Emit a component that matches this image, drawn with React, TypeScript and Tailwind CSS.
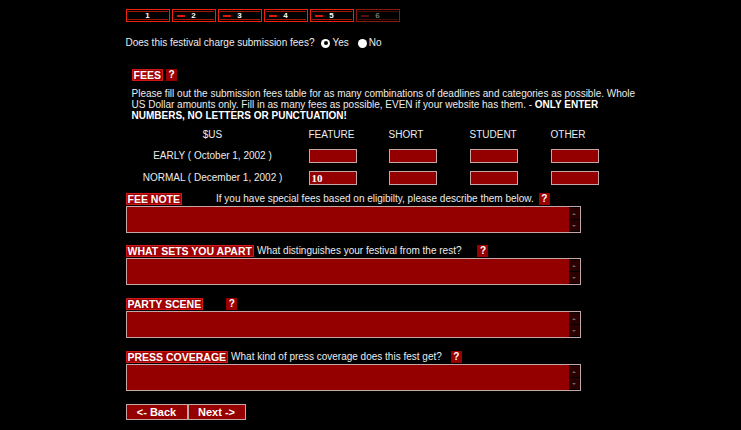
const font = { fontFamily: '"Liberation Sans", Arial, sans-serif' };

const steps = ['1', '2', '3', '4', '5', '6'];
const columns = ['FEATURE', 'SHORT', 'STUDENT', 'OTHER'];
const rows = [
  { label: 'EARLY ( October 1, 2002 )', values: ['', '', '', ''] },
  { label: 'NORMAL ( December 1, 2002 )', values: ['10', '', '', ''] },
];

function Help() {
  return (
    <span className="inline-flex h-[12px] w-[11px] items-center justify-center bg-[#990000] text-[10px] font-bold leading-none text-white">
      ?
    </span>
  );
}

function Label({ children }: { children: React.ReactNode }) {
  return (
    <span className="inline-flex h-[12px] items-center border border-[#d01818] bg-[#a00000] px-[1px] text-[10.5px] font-bold leading-none text-white">
      {children}
    </span>
  );
}

function TextBox() {
  return (
    <div className="flex h-[27px] w-[455px] border border-[#c4a6a6] bg-[#940000]">
      <div className="flex-1" />
      <div className="flex w-[11px] flex-col justify-between bg-black py-[1px]">
        <div className="flex h-[11px] items-center justify-center bg-[#2a0000]">
          <span className="h-0 w-0 border-x-[2px] border-b-[2px] border-x-transparent border-b-[#666]" />
        </div>
        <div className="flex h-[11px] items-center justify-center bg-[#2a0000]">
          <span className="h-0 w-0 border-x-[2px] border-t-[2px] border-x-transparent border-t-[#666]" />
        </div>
      </div>
    </div>
  );
}

function Step({ n, index }: { n: string; index: number }) {
  const dim = index === 5;
  return (
    <div
      className={`flex h-[13px] w-[44px] items-stretch border p-[1px] ${
        dim ? 'border-[#8a1a10]' : 'border-[#f02010]'
      }`}
    >
      <div
        className={`relative flex flex-1 items-center justify-center border-y bg-black ${
          dim ? 'border-[#4a0c08]' : 'border-[#a01808]'
        }`}
      >
        {index > 0 && (
          <span
            className={`absolute left-[3px] top-1/2 h-[2px] w-[8px] -translate-y-1/2 ${
              dim ? 'bg-[#5a1008]' : 'bg-[#e01808]'
            }`}
          />
        )}
        <span className={`text-[8px] font-bold leading-none ${dim ? 'text-[#777]' : 'text-white'}`}>{n}</span>
      </div>
    </div>
  );
}

function Radio({ checked, label }: { checked: boolean; label: string }) {
  return (
    <span className="inline-flex items-center gap-[2px]">
      <span className="flex h-[9px] w-[9px] items-center justify-center rounded-full bg-white">
        {checked && <span className="h-[4px] w-[4px] rounded-full bg-black" />}
      </span>
      <span>{label}</span>
    </span>
  );
}

export default function App() {
  return (
    <div className="min-h-[430px] w-full bg-black text-[#ececec]" style={font}>
      <div className="mx-auto w-[490px] pt-[9px]">
        <div className="flex gap-[2px]">
          {steps.map((s, i) => (
            <Step key={s} n={s} index={i} />
          ))}
        </div>

        <div className="mt-[15px] flex h-[12px] items-center text-[10px] leading-none">
          <span>Does this festival charge submission fees?</span>
          <span className="ml-[7px] flex gap-[9px]">
            <Radio checked label="Yes" />
            <Radio checked={false} label="No" />
          </span>
        </div>

        <div className="ml-[6px] mt-[20px] flex items-center gap-[3px]">
          <Label>FEES</Label>
          <Help />
        </div>

        <p className="ml-[6px] mt-[7px] whitespace-nowrap text-[10px] leading-[11px]">
          Please fill out the submission fees table for as many combinations of deadlines and categories as possible. Whole
          <br />
          US Dollar amounts only. Fill in as many fees as possible, EVEN if your website has them. -{' '}
          <b className="text-white">ONLY ENTER</b>
          <br />
          <b className="text-white">NUMBERS, NO LETTERS OR PUNCTUATION!</b>
        </p>

        <div className="ml-[6px] mt-[8px] grid grid-cols-[177px_80px_81px_81px_81px] text-[10px] leading-none">
          <div className="flex h-[12px] items-center justify-center pr-[15px]">$US</div>
          {columns.map((c) => (
            <div key={c} className="flex h-[12px] items-center">
              {c}
            </div>
          ))}
          {rows.map((r) => (
            <div key={r.label} className="contents">
              <div className="mt-[8px] flex h-[14px] items-center justify-center pr-[15px]">{r.label}</div>
              {r.values.map((v, i) => (
                <div key={i} className="mt-[8px]">
                  <div
                    className="flex h-[14px] w-[48px] items-center border border-[#c4a6a6] bg-[#940000] px-[2px] text-[11px] font-bold text-white"
                    style={{ fontFamily: '"Liberation Serif", serif' }}
                  >
                    {v}
                  </div>
                </div>
              ))}
            </div>
          ))}
        </div>

        <div className="mt-[8px] flex items-center text-[10px] leading-none">
          <Label>FEE NOTE</Label>
          <span className="ml-[34px]">If you have special fees based on eligibilty, please describe them below.</span>
          <span className="ml-[5px]">
            <Help />
          </span>
        </div>
        <div className="mt-[1px]">
          <TextBox />
        </div>

        <div className="mt-[12px] flex items-center text-[10px] leading-none">
          <Label>WHAT SETS YOU APART</Label>
          <span className="ml-[3px]">What distinguishes your festival from the rest?</span>
          <span className="ml-[16px]">
            <Help />
          </span>
        </div>
        <div className="mt-[1px]">
          <TextBox />
        </div>

        <div className="mt-[13px] flex items-center text-[10px] leading-none">
          <Label>PARTY SCENE</Label>
          <span className="ml-[23px]">
            <Help />
          </span>
        </div>
        <div className="mt-[1px]">
          <TextBox />
        </div>

        <div className="mt-[13px] flex items-center text-[10px] leading-none">
          <Label>PRESS COVERAGE</Label>
          <span className="ml-[3px]">What kind of press coverage does this fest get?</span>
          <span className="ml-[9px]">
            <Help />
          </span>
        </div>
        <div className="mt-[1px]">
          <TextBox />
        </div>

        <div className="mt-[13px] flex">
          <button className="h-[16px] w-[62px] border border-[#c4a6a6] bg-[#940000] text-[11px] font-bold leading-none text-white">
            &lt;- Back
          </button>
          <button className="h-[16px] w-[58px] border border-[#c4a6a6] bg-[#940000] text-[11px] font-bold leading-none text-white">
            Next -&gt;
          </button>
        </div>
      </div>
    </div>
  );
}
